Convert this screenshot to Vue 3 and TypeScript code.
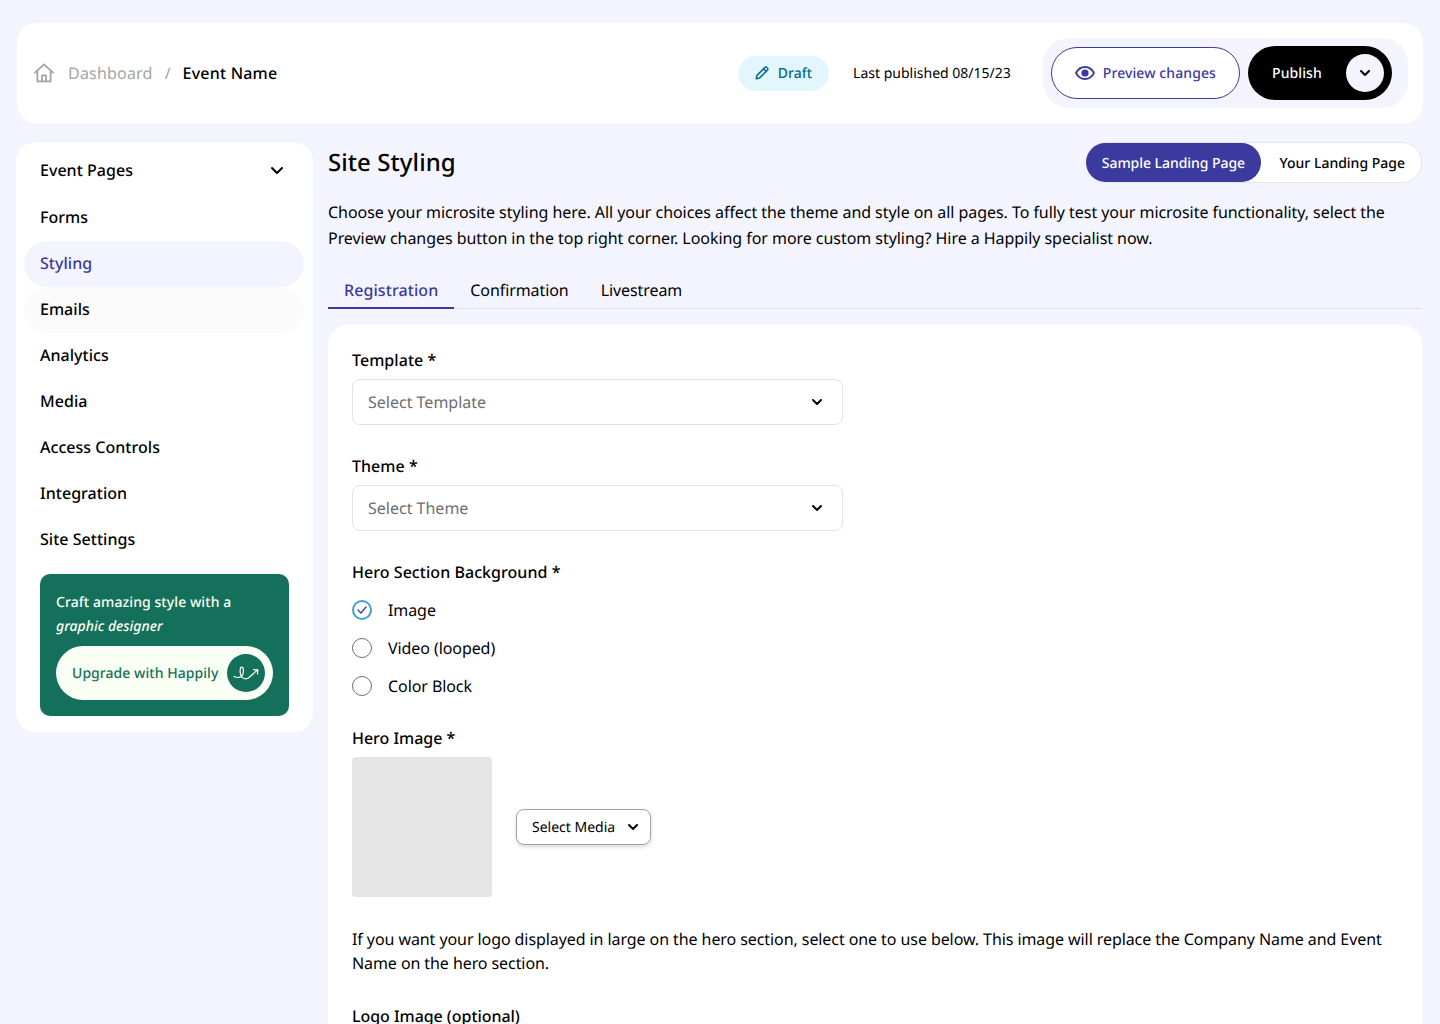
<template>
  <div class="page">
    <header class="topbar">
      <nav class="crumbs">
        <svg class="home" width="22" height="22" viewBox="0 0 22 22" fill="none" stroke="#a3a3a3" stroke-width="1.8" stroke-linejoin="round" stroke-linecap="round">
          <path d="M2 10.6 11 2.4l9 8.2" />
          <path d="M4.4 9v10.4h13.2V9" />
          <path d="M9 19.4v-6h4v6" />
        </svg>
        <span class="crumb-link">Dashboard</span>
        <span class="crumb-sep">/</span>
        <span class="crumb-current">Event Name</span>
      </nav>
      <div class="top-right">
        <span class="draft">
          <svg width="16" height="16" viewBox="0 0 16 16" fill="none" stroke="#006b86" stroke-width="1.5" stroke-linejoin="round" stroke-linecap="round">
            <path d="M2.2 13.8 3 10.4 10.8 2.6a1.5 1.5 0 0 1 2.2 0l.4.4a1.5 1.5 0 0 1 0 2.2L5.600 13z" />
            <path d="M9.600 3.800 12.200 6.400" />
          </svg>
          Draft
        </span>
        <span class="published">Last published 08/15/23</span>
        <div class="actions">
          <button class="preview">
            <svg width="20" height="14" viewBox="0 0 20 14">
              <path d="M1 7c2-3.800 5.200-6 9-6s7 2.200 9 6c-2 3.800-5.200 6-9 6s-7-2.200-9-6z" fill="none" stroke="#3b3a9e" stroke-width="1.800" />
              <circle cx="10" cy="7" r="3.600" fill="#3b3a9e" />
            </svg>
            Preview changes
          </button>
          <button class="publish">
            <span>Publish</span>
            <span class="publish-toggle">
              <svg width="12" height="8" viewBox="0 0 12 8" fill="none" stroke="#000" stroke-width="2" stroke-linecap="round" stroke-linejoin="round"><path d="M2 2l4 4 4-4" /></svg>
            </span>
          </button>
        </div>
      </div>
    </header>

    <div class="body">
      <aside class="sidebar">
        <ul class="menu">
          <li v-for="item in menuItems" :key="item" class="menu-item" :class="{ active: item === 'Styling', hovered: item === 'Emails' }">
            {{ item }}
            <svg v-if="item === 'Event Pages'" class="menu-chevron" width="14" height="9" viewBox="0 0 14 9" fill="none" stroke="#000" stroke-width="2" stroke-linecap="round" stroke-linejoin="round"><path d="M2 2l5 5 5-5" /></svg>
          </li>
        </ul>
        <div class="promo">
          <p>Craft amazing style with a<br /><em>graphic designer</em></p>
          <button class="upgrade">
            <span>Upgrade with Happily</span>
            <span class="upgrade-icon">
              <svg width="26" height="14" viewBox="0 0 26 14" fill="none" stroke="#fafff5" stroke-width="1.200" stroke-linecap="round" stroke-linejoin="round">
                <path d="M1 10.500C4 12 8 12 9.500 9 11 6 10.500 1.200 8.700 1.200 7 1.200 6.500 6 8 9.500c1.500 4 5.500 4 8 2 3-2.500 6-5.500 8.500-7.500" />
                <path d="M20.500 3.600l4.300.2-.3 4.200" />
              </svg>
            </span>
          </button>
        </div>
      </aside>

      <main class="main">
        <div class="title-row">
          <h1>Site Styling</h1>
          <div class="switch">
            <span class="switch-on">Sample Landing Page</span>
            <span class="switch-off">Your Landing Page</span>
          </div>
        </div>
        <p class="intro">Choose your microsite styling here. All your choices affect the theme and style on all pages. To fully test your microsite functionality, select the Preview changes button in the top right corner. Looking for more custom styling? Hire a Happily specialist now.</p>

        <div class="tabs">
          <span v-for="tab in tabs" :key="tab" class="tab" :class="{ current: tab === 'Registration' }">{{ tab }}</span>
        </div>

        <section class="card">
          <label class="label">Template *</label>
          <div class="select">
            <span>Select Template</span>
            <svg width="12" height="8" viewBox="0 0 12 8" fill="none" stroke="#000" stroke-width="2" stroke-linecap="round" stroke-linejoin="round"><path d="M2 2l4 4 4-4" /></svg>
          </div>

          <label class="label spaced">Theme *</label>
          <div class="select">
            <span>Select Theme</span>
            <svg width="12" height="8" viewBox="0 0 12 8" fill="none" stroke="#000" stroke-width="2" stroke-linecap="round" stroke-linejoin="round"><path d="M2 2l4 4 4-4" /></svg>
          </div>

          <label class="label spaced">Hero Section Background *</label>
          <div class="radios">
            <div v-for="option in heroOptions" :key="option" class="radio-row">
              <span class="radio" :class="{ checked: option === 'Image' }">
                <svg v-if="option === 'Image'" width="10" height="8" viewBox="0 0 10 8" fill="none" stroke="#3b3a9e" stroke-width="1.300" stroke-linecap="round" stroke-linejoin="round"><path d="M1 4l3 3 5-6" /></svg>
              </span>
              {{ option }}
            </div>
          </div>

          <label class="label hero-label">Hero Image *</label>
          <div class="media-row">
            <div class="thumb"></div>
            <button class="media-btn">
              Select Media
              <svg width="12" height="8" viewBox="0 0 12 8" fill="none" stroke="#000" stroke-width="2" stroke-linecap="round" stroke-linejoin="round"><path d="M2 2l4 4 4-4" /></svg>
            </button>
          </div>

          <p class="note">If you want your logo displayed in large on the hero section, select one to use below. This image will replace the Company Name and Event Name on the hero section.</p>

          <label class="label logo-label">Logo Image (optional)</label>
        </section>
      </main>
    </div>
  </div>
</template>

<script setup lang="ts">
const menuItems: string[] = [
  "Event Pages",
  "Forms",
  "Styling",
  "Emails",
  "Analytics",
  "Media",
  "Access Controls",
  "Integration",
  "Site Settings",
];

const tabs: string[] = ["Registration", "Confirmation", "Livestream"];

const heroOptions: string[] = ["Image", "Video (looped)", "Color Block"];
</script>

<style>
html,
body {
  margin: 0;
  height: 100%;
  overflow: hidden;
  background: #f3f4fd;
}
</style>

<style scoped>
.page {
  height: 1024px;
  overflow: hidden;
  padding: 23px 18px 0 16px;
  box-sizing: border-box;
  font-family: "Noto Sans", sans-serif;
  font-size: 16px;
  color: #000;
  text-rendering: geometricPrecision;
}
button {
  font-family: inherit;
  text-rendering: inherit;
  cursor: pointer;
}
.topbar {
  display: flex;
  align-items: center;
  justify-content: space-between;
  height: 100px;
  margin-left: 1px;
  margin-right: -1px;
  padding: 0 15px 0 16px;
  background: #fff;
  border-radius: 20px;
}
.crumbs {
  display: flex;
  align-items: center;
}
.home {
  margin-right: 13px;
}
.crumb-link {
  color: #a3a3a3;
  letter-spacing: 0.2px;
}
.crumb-sep {
  margin: 0 12px;
  color: #a3a3a3;
}
.crumb-current {
  font-weight: 500;
  letter-spacing: 0.2px;
}
.top-right {
  display: flex;
  align-items: center;
}
.draft {
  display: flex;
  align-items: center;
  gap: 8px;
  height: 35px;
  padding: 0 17px 0 16px;
  border-radius: 18px;
  background: #e3f6fd;
  color: #006b86;
  font-size: 14px;
  font-weight: 500;
}
.published {
  margin: 0 32px 0 24px;
  font-size: 14px;
}
.actions {
  display: flex;
  align-items: center;
  gap: 8px;
  height: 70px;
  padding: 0 16px 0 8px;
  border-radius: 26px;
  background: #f3f4fd;
}
.preview {
  display: flex;
  align-items: center;
  gap: 8px;
  height: 52px;
  padding: 0 23px;
  background: #fff;
  border: 1px solid #3b3a9e;
  border-radius: 26px;
  color: #3b3a9e;
  font-size: 14px;
  font-weight: 500;
  letter-spacing: 0.1px;
}
.publish {
  display: flex;
  align-items: center;
  justify-content: space-between;
  width: 144px;
  height: 54px;
  padding: 0 8px 0 24px;
  background: #000;
  border: 0;
  border-radius: 27px;
  color: #fff;
  font-size: 14px;
  font-weight: 500;
  letter-spacing: 0.1px;
}
.publish-toggle {
  display: flex;
  align-items: center;
  justify-content: center;
  width: 38px;
  height: 38px;
  border-radius: 50%;
  background: #f3f4fd;
}
.body {
  display: flex;
  align-items: flex-start;
  gap: 15px;
  margin-top: 19px;
}
.sidebar {
  flex: 0 0 297px;
  box-sizing: border-box;
  height: 590px;
  padding: 7px 8px 0;
  background: #fff;
  border-radius: 20px;
}
.menu {
  margin: 0;
  padding: 0;
  list-style: none;
}
.menu-item {
  display: flex;
  align-items: center;
  justify-content: space-between;
  box-sizing: border-box;
  width: 280px;
  height: 46px;
  padding: 0 20px 2px 16px;
  border-radius: 23px;
  font-weight: 500;
  letter-spacing: 0.03px;
}
.menu-item:first-child {
  padding-bottom: 4px;
}
.menu-item.active {
  background: #f3f4fd;
  color: #3b3a9e;
}
.menu-item.hovered {
  background: #fbfbfc;
}
.promo {
  box-sizing: border-box;
  width: 249px;
  height: 142px;
  margin: 11px 0 0 16px;
  padding: 17px 16px 16px;
  background: #14705a;
  border-radius: 10px;
  color: #fafff5;
}
.promo p {
  margin: 0 0 7px;
  font-size: 14px;
  line-height: 24px;
  font-weight: 500;
  letter-spacing: 0.08px;
}
.promo em {
  font-style: italic;
  letter-spacing: 0;
}
.upgrade {
  display: flex;
  align-items: center;
  justify-content: space-between;
  box-sizing: border-box;
  width: 217px;
  height: 54px;
  padding: 0 8px 0 16px;
  background: #fafff5;
  border: 0;
  border-radius: 27px;
  color: #14705a;
  font-size: 14px;
  font-weight: 500;
  letter-spacing: 0.05px;
}
.upgrade-icon {
  display: flex;
  align-items: center;
  justify-content: center;
  width: 38px;
  height: 38px;
  border-radius: 50%;
  background: #14705a;
}
.main {
  flex: 1;
  min-width: 0;
}
.title-row {
  display: flex;
  align-items: center;
  justify-content: space-between;
  height: 42px;
}
h1 {
  margin: 0;
  font-size: 24px;
  line-height: 42px;
  font-weight: 500;
  letter-spacing: 0.08px;
}
.switch {
  display: flex;
  align-items: center;
  height: 39px;
  margin-top: -2px;
  background: #fff;
  border: 1px solid #e6e6e6;
  border-radius: 20px;
  font-size: 14px;
  font-weight: 500;
}
.switch-on {
  display: flex;
  align-items: center;
  box-sizing: border-box;
  height: 39px;
  padding: 2px 16px 0;
  margin-left: -1px;
  background: #3b3a9e;
  border-radius: 20px;
  color: #fff;
  letter-spacing: -0.05px;
}
.switch-off {
  padding: 2px 16px 0 18.500px;
}
.intro {
  margin: 15px 0 0;
  font-size: 16px;
  line-height: 26px;
  letter-spacing: -0.05px;
}
.tabs {
  display: flex;
  height: 39px;
  margin-top: 18px;
  border-bottom: 1px solid #e0e0e8;
}
.tab {
  box-sizing: border-box;
  height: 40px;
  padding: 10px 16px 0;
  line-height: 22px;
  letter-spacing: -0.08px;
}
.tab.current {
  border-bottom: 2px solid #3b3a9e;
  color: #3b3a9e;
  font-weight: 500;
  letter-spacing: 0.08px;
}
.card {
  margin-top: 16px;
  padding: 24px;
  background: #fff;
  border-radius: 20px;
}
.label {
  display: block;
  font-weight: 500;
  line-height: 22px;
  letter-spacing: 0.05px;
}
.spaced {
  margin-top: 30px;
}
.select {
  display: flex;
  align-items: center;
  justify-content: space-between;
  box-sizing: border-box;
  width: 491px;
  height: 46px;
  margin-top: 8px;
  padding: 0 19px 0 15px;
  background: #fff;
  border: 1px solid #e3e3e3;
  border-radius: 8px;
  color: #6e6e6e;
}
.radios {
  display: flex;
  flex-direction: column;
  gap: 14px;
  margin-top: 15px;
}
.radio-row {
  display: flex;
  align-items: center;
  gap: 16px;
  height: 24px;
  letter-spacing: -0.08px;
}
.radio {
  display: flex;
  align-items: center;
  justify-content: center;
  box-sizing: border-box;
  width: 20px;
  height: 20px;
  border: 1.300px solid #6e6e6e;
  border-radius: 50%;
}
.radio.checked {
  border: 2px solid #3fa3c9;
}
.hero-label {
  margin-top: 29px;
  letter-spacing: -0.03px;
}
.media-row {
  display: flex;
  align-items: center;
  gap: 24px;
  margin-top: 8px;
}
.thumb {
  width: 140px;
  height: 140px;
  background: #e5e5e5;
  border-radius: 4px;
}
.media-btn {
  display: flex;
  align-items: center;
  gap: 12px;
  box-sizing: border-box;
  height: 36px;
  padding: 0 11px 0 15px;
  background: #fff;
  border: 1px solid #a3a3a3;
  border-radius: 8px;
  box-shadow: 0 2px 4px rgba(0, 0, 0, 0.15);
  color: #000;
  font-size: 14px;
}
.note {
  margin: 30px 0 0;
  line-height: 24px;
  letter-spacing: -0.08px;
}
.logo-label {
  margin-top: 30px;
  letter-spacing: -0.05px;
}
</style>
